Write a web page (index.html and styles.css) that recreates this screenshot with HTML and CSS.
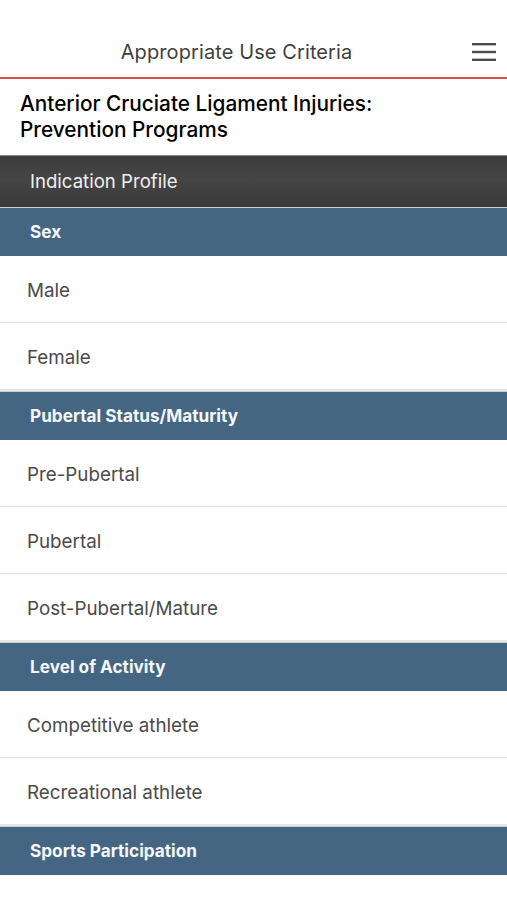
FILE: index.html
```html
<!DOCTYPE html>
<html>
<head>
<meta charset="utf-8">
<link rel="stylesheet" href="styles.css">
</head>
<body>
<header class="topbar">
  <div class="topbar-title">Appropriate Use Criteria</div>
  <svg class="menu" width="26" height="20" viewBox="0 0 26 20">
    <rect x="1" y="1" width="24" height="2.4" fill="#4a4a4a"/>
    <rect x="1" y="8.8" width="24" height="2.4" fill="#4a4a4a"/>
    <rect x="1" y="16.6" width="24" height="2.4" fill="#4a4a4a"/>
  </svg>
</header>
<div class="doc-title">Anterior Cruciate Ligament Injuries:<br>Prevention Programs</div>
<div class="profile">Indication Profile</div>

<section class="group">
  <div class="group-head">Sex</div>
  <div class="row">Male</div>
  <div class="row">Female</div>
</section>
<section class="group">
  <div class="group-head">Pubertal Status/Maturity</div>
  <div class="row">Pre-Pubertal</div>
  <div class="row">Pubertal</div>
  <div class="row">Post-Pubertal/Mature</div>
</section>
<section class="group">
  <div class="group-head">Level of Activity</div>
  <div class="row">Competitive athlete</div>
  <div class="row">Recreational athlete</div>
</section>
<section class="group">
  <div class="group-head">Sports Participation</div>
</section>
</body>
</html>
```
FILE: styles.css
```css
* { box-sizing: border-box; }
html, body { margin: 0; padding: 0; background: #fff; }
body {
  font-family: Inter, "Noto Sans", "Liberation Sans", sans-serif;
  width: 507px;
}
.topbar {
  position: relative;
  height: 79px;
  padding-top: 28px;
  padding-right: 34px;
  border-bottom: 2px solid #de4f4a;
  display: flex;
  justify-content: center;
}
.topbar-title {
  height: 48px;
  line-height: 48px;
  font-size: 20px;
  color: #3f3f3f;
  letter-spacing: 0.1px;
}
.menu {
  position: absolute;
  right: 10px;
  top: 42px;
}
.doc-title {
  padding: 12px 20px 12px 20px;
  font-size: 20.8px;
  line-height: 26px;
  color: #000;
  font-weight: 500;
  height: 76px;
}
.profile {
  height: 52px;
  border-top: 1px solid #8a8a8a;
  background: linear-gradient(#3c3c3c, #454545 45%, #383838);
  color: #f0f0f0;
  font-size: 18.6px;
  line-height: 51px;
  padding-left: 30px;
}
.group-head {
  height: 49px;
  border-top: 1px solid #c9d3dc;
  background: #456682;
  color: #f4f6f8;
  font-weight: 700;
  font-size: 17.2px;
  line-height: 48px;
  padding-left: 30px;
}
.row {
  height: 67px;
  border-bottom: 1px solid #e3e3e3;
  font-size: 18.8px;
  line-height: 66px;
  padding-top: 2px;
  color: #4a4a4a;
  padding-left: 27px;
}
.row:last-child {
  height: 68px;
  border-bottom: 2px solid #e6e6e6;
}
```
